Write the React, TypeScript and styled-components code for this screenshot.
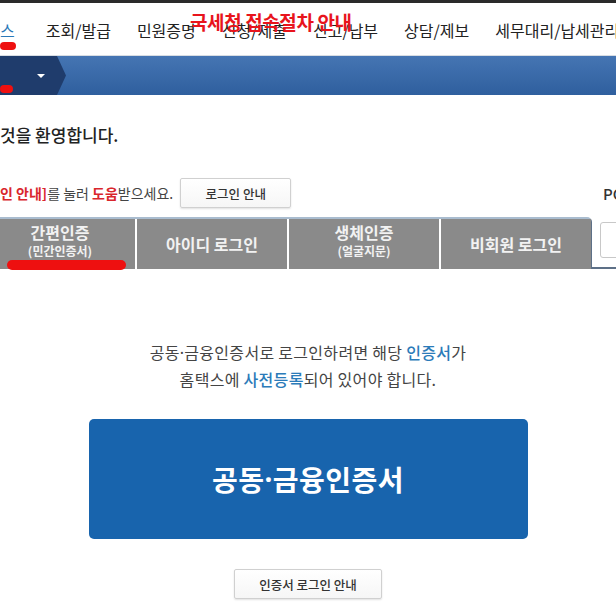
import React from 'react';
import styled, { createGlobalStyle } from 'styled-components';

const GlobalStyle = createGlobalStyle`
  html, body {
    margin: 0;
    padding: 0;
    background: #ffffff;
  }
  body {
    font-family: "Noto Sans CJK KR", "Noto Sans", sans-serif;
    color: #333;
  }
`;

const menus = ['조회/발급', '민원증명', '신청/제출', '신고/납부', '상담/제보', '세무대리/납세관리'];

type TabItem = { title: string; sub?: string };

const tabs: TabItem[] = [
  { title: '간편인증', sub: '(민간인증서)' },
  { title: '아이디 로그인' },
  { title: '생체인증', sub: '(얼굴지문)' },
  { title: '비회원 로그인' },
];

function App() {
  return (
    <Page>
      <GlobalStyle />
      <TopStrip />
      <Header>
        <Nav>
          <LogoTail>스</LogoTail>
          {menus.map((m) => (
            <NavItem key={m}>{m}</NavItem>
          ))}
        </Nav>
        <Notice>국세청 접속절차 안내</Notice>
        <Scribble $left={0} $top={39} $width={16} $height={8} />
      </Header>
      <BlueBar>
        <MenuToggle>
          <Caret />
        </MenuToggle>
        <Scribble $left={0} $top={29} $width={13} $height={8} />
      </BlueBar>

      <Content>
        <Welcome>것을 환영합니다.</Welcome>
        <HelpRow>
          <HelpText>
            <Red>인 안내]</Red>를 눌러 <Red>도움</Red>받으세요.
          </HelpText>
          <GhostButton $width={111} $height={30}>로그인 안내</GhostButton>
          <PcLabel>PC 인증서</PcLabel>
        </HelpRow>

        <TabRow>
          <Tabs>
            {tabs.map((t) => (
              <Tab key={t.title} $double={!!t.sub}>
                <TabTitle>{t.title}</TabTitle>
                {t.sub && <TabSub>{t.sub}</TabSub>}
              </Tab>
            ))}
            <Scribble $left={22} $top={41} $width={119} $height={10} />
          </Tabs>
          <SideArea>
            <SideBox />
          </SideArea>
        </TabRow>

        <Guide>
          공동<Dot>·</Dot>금융인증서로 로그인하려면 해당 <Blue>인증서</Blue>가
          <br />
          홈택스에 <Blue>사전등록</Blue>되어 있어야 합니다.
        </Guide>

        <CertButton>
          공동<Dot>·</Dot>금융인증서
        </CertButton>

        <GhostButton $width={148} $height={30}>인증서 로그인 안내</GhostButton>
      </Content>
    </Page>
  );
}

const Page = styled.div`
  width: 616px;
  height: 616px;
  overflow: hidden;
  position: relative;
  background: #fff;
`;

const TopStrip = styled.div`
  height: 3px;
  background: #2a2a2a;
`;

const Header = styled.div`
  position: relative;
  height: 52px;
  border-bottom: 1px solid #d8dde3;
`;

const Nav = styled.nav`
  display: flex;
  align-items: center;
  height: 100%;
  gap: 26px;
  white-space: nowrap;
  padding-top: 2px;
  box-sizing: border-box;
`;

const LogoTail = styled.span`
  font-size: 16px;
  color: #2a78b8;
  margin-right: 5px;
  flex-shrink: 0;
`;

const NavItem = styled.span`
  font-size: 16px;
  color: #222;
  flex-shrink: 0;
`;

const Notice = styled.div`
  position: absolute;
  left: 190px;
  top: 5px;
  font-size: 19px;
  font-weight: 700;
  color: #e8141c;
  letter-spacing: -0.4px;
  white-space: nowrap;
`;

const Scribble = styled.div<{ $left: number; $top: number; $width: number; $height: number }>`
  position: absolute;
  left: ${(p) => p.$left}px;
  top: ${(p) => p.$top}px;
  width: ${(p) => p.$width}px;
  height: ${(p) => p.$height}px;
  background: #ee1010;
  border-radius: 6px;
`;

const BlueBar = styled.div`
  position: relative;
  height: 39px;
  background: linear-gradient(#4575b3, #2f5f9e);
  display: flex;
`;

const MenuToggle = styled.div`
  width: 66px;
  height: 100%;
  background: #1f3c6c;
  clip-path: polygon(0 0, 57px 0, 66px 50%, 57px 100%, 0 100%);
  display: flex;
  align-items: center;
  padding-left: 37px;
  box-sizing: border-box;
`;

const Caret = styled.div`
  width: 0;
  height: 0;
  border-left: 4px solid transparent;
  border-right: 4px solid transparent;
  border-top: 4px solid #ffffff;
`;

const Content = styled.div`
  display: flex;
  flex-direction: column;
  align-items: center;
`;

const Welcome = styled.div`
  align-self: flex-start;
  margin-top: 28px;
  font-size: 17px;
  font-weight: 500;
  color: #222;
  line-height: 24px;
`;

const HelpRow = styled.div`
  align-self: stretch;
  display: flex;
  align-items: center;
  margin-top: 31px;
  white-space: nowrap;
`;

const HelpText = styled.span`
  font-size: 14px;
  color: #444;
`;

const Red = styled.span`
  color: #d9262c;
  font-weight: 700;
`;

const GhostButton = styled.div<{ $width: number; $height: number }>`
  width: ${(p) => p.$width}px;
  height: ${(p) => p.$height}px;
  box-sizing: border-box;
  border: 1px solid #d0d0d0;
  border-radius: 2px;
  background: linear-gradient(#ffffff, #f6f6f6);
  box-shadow: 0 1px 2px rgba(0, 0, 0, 0.12);
  display: flex;
  align-items: center;
  justify-content: center;
  font-size: 12.5px;
  color: #333;
  font-weight: 500;
  flex-shrink: 0;
  ${HelpRow} & {
    margin-left: 7px;
  }
`;

const PcLabel = styled.span`
  margin-left: auto;
  width: 13px;
  font-size: 15px;
  font-weight: 500;
  color: #333;
  overflow: visible;
`;

const TabRow = styled.div`
  align-self: stretch;
  display: flex;
  margin-top: 9px;
  height: 52px;
`;

const Tabs = styled.div`
  position: relative;
  display: flex;
  gap: 2px;
  margin-left: -15px;
  border-top: 2px solid #a9bccf;
  border-right: 1px solid #5d7087;
  border-top-right-radius: 5px;
`;

const Tab = styled.div<{ $double: boolean }>`
  width: 150px;
  height: 50px;
  box-sizing: border-box;
  background: #8a8a8a;
  color: #f2f2f2;
  display: flex;
  flex-direction: column;
  align-items: center;
  justify-content: ${(p) => (p.$double ? 'flex-start' : 'center')};
  padding-top: ${(p) => (p.$double ? 3 : 0)}px;
  &:last-of-type {
    border-top-right-radius: 4px;
  }
`;

const TabTitle = styled.span`
  font-size: 16px;
  font-weight: 700;
  line-height: 20px;
`;

const TabSub = styled.span`
  font-size: 12px;
  font-weight: 700;
  line-height: 17px;
`;

const SideArea = styled.div`
  flex: 1;
  border-bottom: 2px solid #5d7087;
  padding: 5px 0 0 8px;
  box-sizing: border-box;
`;

const SideBox = styled.div`
  width: 40px;
  height: 36px;
  box-sizing: border-box;
  border: 1px solid #c8c8c8;
  border-radius: 3px;
  background: #fff;
`;

const Guide = styled.p`
  margin: 70px 0 0;
  text-align: center;
  font-size: 16px;
  line-height: 26px;
  color: #444;
  letter-spacing: 0.3px;
`;

const Dot = styled.span`
  font-family: "Noto Sans", sans-serif;
`;

const Blue = styled.span`
  color: #2b7bb9;
  font-weight: 500;
`;

const CertButton = styled.div`
  margin-top: 27px;
  width: 439px;
  height: 120px;
  border-radius: 5px;
  background: #1864ad;
  color: #fff;
  display: flex;
  align-items: center;
  justify-content: center;
  font-size: 28px;
  font-weight: 700;
  letter-spacing: 0.5px;
  margin-bottom: 30px;
`;

export default App;
